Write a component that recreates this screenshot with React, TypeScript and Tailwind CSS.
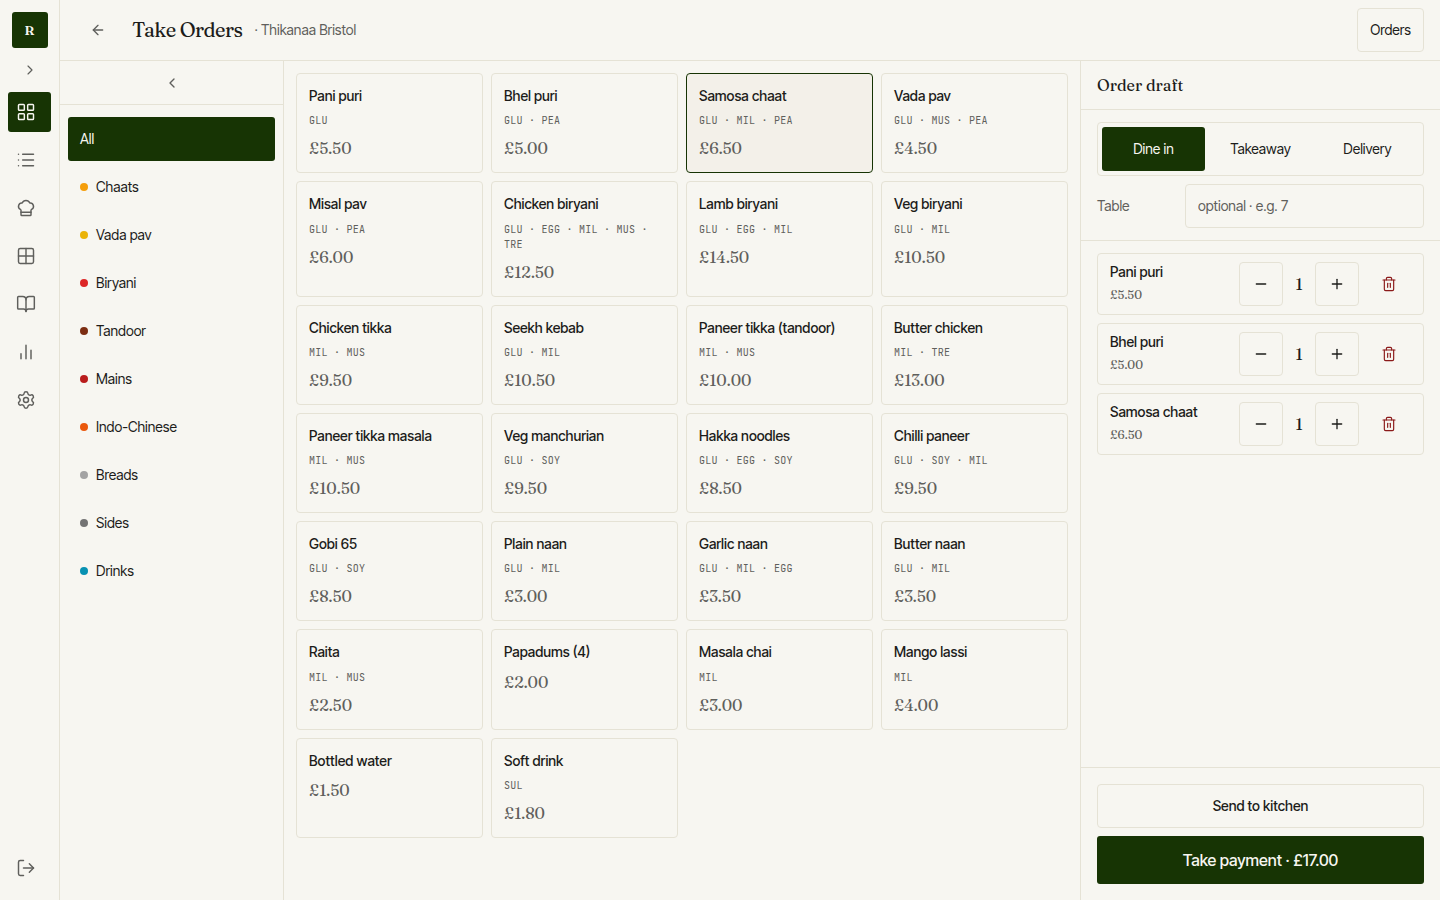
import React, { useState } from 'react';
import clsx from 'clsx';
import {
  ArrowLeft,
  BookOpen,
  ChefHat,
  ChevronLeft,
  ChevronRight,
  Grid2x2,
  LayoutGrid,
  List,
  LogOut,
  Minus,
  Plus,
  Settings,
  Trash2,
} from 'lucide-react';

const SERIF = "font-['Fraunces','Liberation_Serif',serif]";
const MONO = "font-['JetBrains_Mono','Liberation_Mono',monospace]";

const categories = [
  { name: 'Chaats', dot: 'bg-[#f59e0b]' },
  { name: 'Vada pav', dot: 'bg-[#eab308]' },
  { name: 'Biryani', dot: 'bg-[#dc2626]' },
  { name: 'Tandoor', dot: 'bg-[#7c2d12]' },
  { name: 'Mains', dot: 'bg-[#b91c1c]' },
  { name: 'Indo-Chinese', dot: 'bg-[#ea580c]' },
  { name: 'Breads', dot: 'bg-[#a3a3a3]' },
  { name: 'Sides', dot: 'bg-[#737373]' },
  { name: 'Drinks', dot: 'bg-[#0891b2]' },
];

interface MenuItem {
  name: string;
  allergens: string[];
  price: number;
}

const menu: MenuItem[] = [
  { name: 'Pani puri', allergens: ['GLU'], price: 5.5 },
  { name: 'Bhel puri', allergens: ['GLU', 'PEA'], price: 5 },
  { name: 'Samosa chaat', allergens: ['GLU', 'MIL', 'PEA'], price: 6.5 },
  { name: 'Vada pav', allergens: ['GLU', 'MUS', 'PEA'], price: 4.5 },
  { name: 'Misal pav', allergens: ['GLU', 'PEA'], price: 6 },
  { name: 'Chicken biryani', allergens: ['GLU', 'EGG', 'MIL', 'MUS', 'TRE'], price: 12.5 },
  { name: 'Lamb biryani', allergens: ['GLU', 'EGG', 'MIL'], price: 14.5 },
  { name: 'Veg biryani', allergens: ['GLU', 'MIL'], price: 10.5 },
  { name: 'Chicken tikka', allergens: ['MIL', 'MUS'], price: 9.5 },
  { name: 'Seekh kebab', allergens: ['GLU', 'MIL'], price: 10.5 },
  { name: 'Paneer tikka (tandoor)', allergens: ['MIL', 'MUS'], price: 10 },
  { name: 'Butter chicken', allergens: ['MIL', 'TRE'], price: 13 },
  { name: 'Paneer tikka masala', allergens: ['MIL', 'MUS'], price: 10.5 },
  { name: 'Veg manchurian', allergens: ['GLU', 'SOY'], price: 9.5 },
  { name: 'Hakka noodles', allergens: ['GLU', 'EGG', 'SOY'], price: 8.5 },
  { name: 'Chilli paneer', allergens: ['GLU', 'SOY', 'MIL'], price: 9.5 },
  { name: 'Gobi 65', allergens: ['GLU', 'SOY'], price: 8.5 },
  { name: 'Plain naan', allergens: ['GLU', 'MIL'], price: 3 },
  { name: 'Garlic naan', allergens: ['GLU', 'MIL', 'EGG'], price: 3.5 },
  { name: 'Butter naan', allergens: ['GLU', 'MIL'], price: 3.5 },
  { name: 'Raita', allergens: ['MIL', 'MUS'], price: 2.5 },
  { name: 'Papadums (4)', allergens: [], price: 2 },
  { name: 'Masala chai', allergens: ['MIL'], price: 3 },
  { name: 'Mango lassi', allergens: ['MIL'], price: 4 },
  { name: 'Bottled water', allergens: [], price: 1.5 },
  { name: 'Soft drink', allergens: ['SUL'], price: 1.8 },
];

const orderTypes = ['Dine in', 'Takeaway', 'Delivery'];

const money = (n: number) => `£${n.toFixed(2)}`;

const BarsIcon: React.FC = () => (
  <svg width="20" height="20" viewBox="0 0 24 24" fill="none" stroke="currentColor" strokeWidth="1.75" strokeLinecap="round" strokeLinejoin="round">
    <path d="M18 20V10M12 20V4M6 20v-6" />
  </svg>
);

const navIcons = [
  <LayoutGrid size={20} strokeWidth={1.75} />,
  <List size={20} strokeWidth={1.75} />,
  <ChefHat size={20} strokeWidth={1.75} />,
  <Grid2x2 size={20} strokeWidth={1.75} />,
  <BookOpen size={20} strokeWidth={1.75} />,
  <BarsIcon />,
  <Settings size={20} strokeWidth={1.75} />,
];

const Sidebar: React.FC = () => (
  <aside className="flex w-[60px] shrink-0 flex-col border-r border-[#e5e2d5] text-[#5f5f5c]">
    <div className={clsx(SERIF, 'ml-3 mt-3 flex size-9 items-center justify-center rounded-[3px] bg-[#173404] pr-px text-[13px] font-semibold text-[#f7f6f1]')}>
      R
    </div>
    <button className="flex h-11 items-center justify-center">
      <ChevronRight size={16} strokeWidth={1.75} />
    </button>
    <nav className="flex flex-col gap-2 pl-2 pr-2">
      {navIcons.map((icon, i) => (
        <button
          key={i}
          className={clsx('flex h-10 items-center rounded-[3px] pl-2', i === 0 && 'bg-[#173404] text-[#f7f6f1]')}
        >
          {icon}
        </button>
      ))}
    </nav>
    <button className="mb-3 mt-auto flex h-10 items-center pl-4">
      <LogOut size={20} strokeWidth={1.75} />
    </button>
  </aside>
);

const MenuCard: React.FC<{ item: MenuItem; active: boolean; onSelect: () => void }> = ({ item, active, onSelect }) => (
  <button
    onClick={onSelect}
    className={clsx(
      'flex flex-col items-start gap-2 rounded-[4px] border p-3 text-left',
      active ? 'border-[#173404] bg-[#f3f0e9]' : 'border-[#e5e2d5]'
    )}
  >
    <span className="text-sm leading-[19.25px] font-medium">{item.name}</span>
    {item.allergens.length > 0 && (
      <span className={clsx(MONO, 'text-[10px] leading-[15px] tracking-[0.025em] text-[#5f5f5c]')}>
        {item.allergens.join(' · ')}
      </span>
    )}
    <span className={clsx(SERIF, 'text-base leading-6 text-[#5f5f5c]')}>{money(item.price)}</span>
  </button>
);

const OrderLine: React.FC<{ item: MenuItem }> = ({ item }) => (
  <div className="flex h-[62px] items-center rounded-[4px] border border-[#e5e2d5] px-3">
    <div className="flex-1 pb-0.5">
      <div className="text-sm leading-5 font-medium">{item.name}</div>
      <div className={clsx(SERIF, 'mt-1 text-xs leading-[18px] text-[#5f5f5c]')}>{money(item.price)}</div>
    </div>
    <button className="flex size-11 items-center justify-center rounded-[4px] border border-[#e5e2d5]">
      <Minus size={16} strokeWidth={2} />
    </button>
    <span className={clsx(SERIF, 'w-8 text-center text-base')}>1</span>
    <button className="flex size-11 items-center justify-center rounded-[4px] border border-[#e5e2d5]">
      <Plus size={16} strokeWidth={2} />
    </button>
    <button className="ml-2 flex size-11 items-center justify-center text-[#8b1a1a]">
      <Trash2 size={16} strokeWidth={1.75} />
    </button>
  </div>
);

const App: React.FC = () => {
  const [selected, setSelected] = useState('Samosa chaat');
  const [orderType, setOrderType] = useState('Dine in');
  const draft = menu.slice(0, 3);
  const total = draft.reduce((sum, item) => sum + item.price, 0);

  return (
    <div className="flex h-screen overflow-hidden bg-[#f7f6f1] font-['Inter_Tight','Inter',sans-serif] text-sm text-[#1c1c1a]">
      <Sidebar />

      <div className="flex min-w-0 flex-1 flex-col">
        <header className="flex h-[61px] shrink-0 items-center border-b border-[#e5e2d5] px-4">
          <button className="flex size-11 items-center justify-center text-[#5f5f5c]">
            <ArrowLeft size={16} strokeWidth={2} />
          </button>
          <h1 className={clsx(SERIF, 'ml-3 text-xl tracking-[-0.027em]')}>Take Orders</h1>
          <span className="ml-3 text-[#5f5f5c]">· Thikanaa Bristol</span>
          <button className="ml-auto h-11 rounded-[4px] border border-[#e5e2d5] px-3">Orders</button>
        </header>

        <div className="flex min-h-0 flex-1">
          <section className="flex w-56 shrink-0 flex-col border-r border-[#e5e2d5]">
            <button className="flex h-11 items-center justify-center border-b border-[#e5e2d5] text-[#5f5f5c]">
              <ChevronLeft size={16} strokeWidth={2} />
            </button>
            <div className="flex flex-col gap-1 px-2 py-3">
              <button className="flex h-11 items-center rounded-[3px] bg-[#173404] px-3 text-[#f7f6f1]">All</button>
              {categories.map((c) => (
                <button key={c.name} className="flex h-11 items-center gap-2 px-3">
                  <span className={clsx('size-2 rounded-full', c.dot)} />
                  {c.name}
                </button>
              ))}
            </div>
          </section>

          <main className="min-w-0 flex-1 p-3">
            <div className="grid grid-cols-4 gap-2">
              {menu.map((item) => (
                <MenuCard
                  key={item.name}
                  item={item}
                  active={item.name === selected}
                  onSelect={() => setSelected(item.name)}
                />
              ))}
            </div>
          </main>

          <section className="flex w-[360px] shrink-0 flex-col border-l border-[#e5e2d5]">
            <h2 className={clsx(SERIF, 'flex h-[49px] shrink-0 items-center border-b border-[#e5e2d5] px-4 text-base')}>
              Order draft
            </h2>
            <div className="flex flex-col gap-2 border-b border-[#e5e2d5] px-4 py-3">
              <div className="grid grid-cols-3 gap-1 rounded-[4px] border border-[#e5e2d5] p-1">
                {orderTypes.map((type) => (
                  <button
                    key={type}
                    onClick={() => setOrderType(type)}
                    className={clsx('h-11 rounded-[3px]', type === orderType && 'bg-[#173404] text-[#f7f6f1]')}
                  >
                    {type}
                  </button>
                ))}
              </div>
              <label className="flex items-center text-[#5f5f5c]">
                <span className="w-22">Table</span>
                <input
                  placeholder="optional · e.g. 7"
                  className="h-11 min-w-0 flex-1 rounded-[4px] border border-[#e5e2d5] px-3 pb-0.5 placeholder:text-[#5f5f5c]"
                />
              </label>
            </div>
            <div className="flex flex-1 flex-col gap-2 px-4 py-3">
              {draft.map((item) => (
                <OrderLine key={item.name} item={item} />
              ))}
            </div>
            <div className="flex flex-col gap-2 border-t border-[#e5e2d5] p-4">
              <button className="h-11 rounded-[4px] border border-[#e5e2d5] font-medium">Send to kitchen</button>
              <button className="h-12 rounded-[3px] bg-[#173404] text-base font-medium text-[#f7f6f1]">
                Take payment · {money(total)}
              </button>
            </div>
          </section>
        </div>
      </div>
    </div>
  );
};

export default App;
